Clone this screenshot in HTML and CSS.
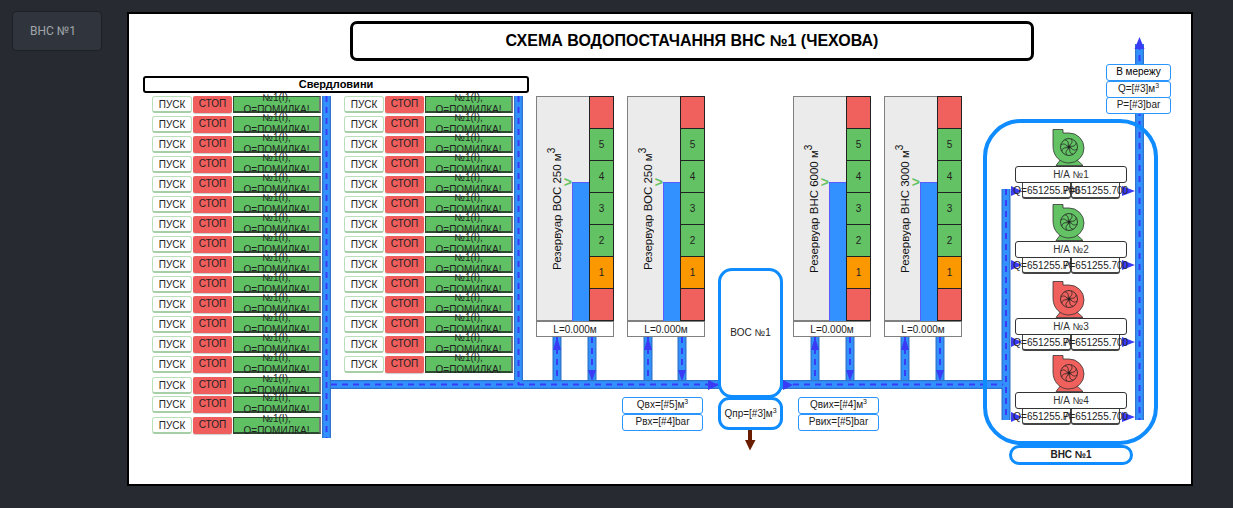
FILE: index.html
```html
<!DOCTYPE html>
<html lang="uk">
<head>
<meta charset="utf-8">
<title>ВНС №1</title>
<link rel="stylesheet" href="styles.css">
</head>
<body>
<aside class="sidebar"><div class="nav-btn">ВНС №1</div></aside>
<main class="canvas">
  <svg class="pipes" width="1062" height="470" viewBox="129 14 1062 470">
    <defs>
      <g id="blades" fill="none" stroke="#222" stroke-width=".8">
        <circle r="8.5"/>
        <circle r="1.2" fill="#222"/>
        <path d="M0 -1.5C3 -3 4 -6 2 -8"/>
        <path d="M0 -1.5C3 -3 4 -6 2 -8" transform="rotate(45)"/>
        <path d="M0 -1.5C3 -3 4 -6 2 -8" transform="rotate(90)"/>
        <path d="M0 -1.5C3 -3 4 -6 2 -8" transform="rotate(135)"/>
        <path d="M0 -1.5C3 -3 4 -6 2 -8" transform="rotate(180)"/>
        <path d="M0 -1.5C3 -3 4 -6 2 -8" transform="rotate(225)"/>
        <path d="M0 -1.5C3 -3 4 -6 2 -8" transform="rotate(270)"/>
        <path d="M0 -1.5C3 -3 4 -6 2 -8" transform="rotate(315)"/>
      </g>
      <g id="pump" stroke="#333" stroke-width=".8">
        <path d="M4 36.500L9 30H24L31 36.500Z"/>
        <path d="M1 .5H11V4H17A15 15 0 0 1 17 34C8 34 1 27 1 17Z"/>
        <use href="#blades" x="17" y="18"/>
      </g>
    </defs>
    <g class="pipe-edge">
      <path d="M326.500 96V438M518.500 96V385M331 384.500H1003"/>
      <path d="M557 337V380M592 337V380M648 337V380M682 337V380M815 337V380M850 337V380M905 337V380M940 337V380"/>
      <path d="M1006 189V420M1139.500 44V420"/>
    </g>
    <g class="pipe-core">
      <path d="M326.500 96V438M518.500 96V385M331 384.500H1003"/>
      <path d="M557 337V380M592 337V380M648 337V380M682 337V380M815 337V380M850 337V380M905 337V380M940 337V380"/>
      <path d="M1006 189V420M1139.500 44V420"/>
    </g>
    <g class="pipe-flow">
      <path d="M326.500 96V438M518.500 96V385M331 384.500H1003"/>
      <path d="M557 337V380M592 337V380M648 337V380M682 337V380M815 337V380M850 337V380M905 337V380M940 337V380"/>
      <path d="M1006 189V420M1139.500 44V420"/>
    </g>
    <g class="heads">
      <path d="M557 337L553 350H561ZM648 337L644 350H652ZM815 337L811 350H819ZM905 337L901 350H909Z"/>
      <path d="M592 381L588 370H596ZM682 381L678 370H686ZM850 381L846 370H854ZM940 381L936 370H944Z"/>
      <path d="M719 385L708 380V390ZM793 385L783 380V390Z"/>
      <path d="M1139.500 37L1134.500 49H1144.500Z"/>
      <path d="M1022 191L1011 186V196ZM1022 265L1011 260V270ZM1022 342L1011 337V347ZM1022 417L1011 412V422Z"/>
      <path d="M1135 191L1122 186V196ZM1135 265L1122 260V270ZM1135 342L1122 337V347ZM1135 417L1122 412V422Z"/>
    </g>
    <path class="drain" d="M750 430V442"/>
    <path class="drain-head" d="M750 450.500L745 440H755.500Z"/>
    <use href="#pump" class="pump-on" x="1052" y="129"/>
    <use href="#pump" class="pump-on" x="1052" y="204"/>
    <use href="#pump" class="pump-off" x="1052" y="281"/>
    <use href="#pump" class="pump-off" x="1052" y="355"/>
  </svg>

  <h1 class="title">СХЕМА ВОДОПОСТАЧАННЯ ВНС №1 (ЧЕХОВА)</h1>
  <div class="wells-title">Свердловини</div>

  <section class="wells wells-a">
    <div class="well"><span class="start">ПУСК</span><span class="stop">СТОП</span><div class="status">№1(І),<br>Q=ПОМИЛКА!</div></div>
    <div class="well"><span class="start">ПУСК</span><span class="stop">СТОП</span><div class="status">№1(І),<br>Q=ПОМИЛКА!</div></div>
    <div class="well"><span class="start">ПУСК</span><span class="stop">СТОП</span><div class="status">№1(І),<br>Q=ПОМИЛКА!</div></div>
    <div class="well"><span class="start">ПУСК</span><span class="stop">СТОП</span><div class="status">№1(І),<br>Q=ПОМИЛКА!</div></div>
    <div class="well"><span class="start">ПУСК</span><span class="stop">СТОП</span><div class="status">№1(І),<br>Q=ПОМИЛКА!</div></div>
    <div class="well"><span class="start">ПУСК</span><span class="stop">СТОП</span><div class="status">№1(І),<br>Q=ПОМИЛКА!</div></div>
    <div class="well"><span class="start">ПУСК</span><span class="stop">СТОП</span><div class="status">№1(І),<br>Q=ПОМИЛКА!</div></div>
    <div class="well"><span class="start">ПУСК</span><span class="stop">СТОП</span><div class="status">№1(І),<br>Q=ПОМИЛКА!</div></div>
    <div class="well"><span class="start">ПУСК</span><span class="stop">СТОП</span><div class="status">№1(І),<br>Q=ПОМИЛКА!</div></div>
    <div class="well"><span class="start">ПУСК</span><span class="stop">СТОП</span><div class="status">№1(І),<br>Q=ПОМИЛКА!</div></div>
    <div class="well"><span class="start">ПУСК</span><span class="stop">СТОП</span><div class="status">№1(І),<br>Q=ПОМИЛКА!</div></div>
    <div class="well"><span class="start">ПУСК</span><span class="stop">СТОП</span><div class="status">№1(І),<br>Q=ПОМИЛКА!</div></div>
    <div class="well"><span class="start">ПУСК</span><span class="stop">СТОП</span><div class="status">№1(І),<br>Q=ПОМИЛКА!</div></div>
    <div class="well"><span class="start">ПУСК</span><span class="stop">СТОП</span><div class="status">№1(І),<br>Q=ПОМИЛКА!</div></div>
    <div class="well well-down"><span class="start">ПУСК</span><span class="stop">СТОП</span><div class="status">№1(І),<br>Q=ПОМИЛКА!</div></div>
    <div class="well well-up"><span class="start">ПУСК</span><span class="stop">СТОП</span><div class="status">№1(І),<br>Q=ПОМИЛКА!</div></div>
    <div class="well well-down"><span class="start">ПУСК</span><span class="stop">СТОП</span><div class="status">№1(І),<br>Q=ПОМИЛКА!</div></div>
  </section>

  <section class="wells wells-b">
    <div class="well"><span class="start">ПУСК</span><span class="stop">СТОП</span><div class="status">№1(І),<br>Q=ПОМИЛКА!</div></div>
    <div class="well"><span class="start">ПУСК</span><span class="stop">СТОП</span><div class="status">№1(І),<br>Q=ПОМИЛКА!</div></div>
    <div class="well"><span class="start">ПУСК</span><span class="stop">СТОП</span><div class="status">№1(І),<br>Q=ПОМИЛКА!</div></div>
    <div class="well"><span class="start">ПУСК</span><span class="stop">СТОП</span><div class="status">№1(І),<br>Q=ПОМИЛКА!</div></div>
    <div class="well"><span class="start">ПУСК</span><span class="stop">СТОП</span><div class="status">№1(І),<br>Q=ПОМИЛКА!</div></div>
    <div class="well"><span class="start">ПУСК</span><span class="stop">СТОП</span><div class="status">№1(І),<br>Q=ПОМИЛКА!</div></div>
    <div class="well"><span class="start">ПУСК</span><span class="stop">СТОП</span><div class="status">№1(І),<br>Q=ПОМИЛКА!</div></div>
    <div class="well"><span class="start">ПУСК</span><span class="stop">СТОП</span><div class="status">№1(І),<br>Q=ПОМИЛКА!</div></div>
    <div class="well"><span class="start">ПУСК</span><span class="stop">СТОП</span><div class="status">№1(І),<br>Q=ПОМИЛКА!</div></div>
    <div class="well"><span class="start">ПУСК</span><span class="stop">СТОП</span><div class="status">№1(І),<br>Q=ПОМИЛКА!</div></div>
    <div class="well"><span class="start">ПУСК</span><span class="stop">СТОП</span><div class="status">№1(І),<br>Q=ПОМИЛКА!</div></div>
    <div class="well"><span class="start">ПУСК</span><span class="stop">СТОП</span><div class="status">№1(І),<br>Q=ПОМИЛКА!</div></div>
    <div class="well"><span class="start">ПУСК</span><span class="stop">СТОП</span><div class="status">№1(І),<br>Q=ПОМИЛКА!</div></div>
    <div class="well"><span class="start">ПУСК</span><span class="stop">СТОП</span><div class="status">№1(І),<br>Q=ПОМИЛКА!</div></div>
  </section>

  <section class="tank tank-1">
    <div class="tank-body">
      <div class="tank-left"><div class="tank-name">Резервуар ВОС 250 м<sup>3</sup></div><span class="level-mark">&gt;</span><div class="level"></div></div>
      <div class="scale"><div class="cell alarm"></div><div class="cell ok">5</div><div class="cell ok">4</div><div class="cell ok">3</div><div class="cell ok">2</div><div class="cell warn">1</div><div class="cell alarm"></div></div>
    </div>
    <div class="tank-level">L=0.000м</div>
  </section>
  <section class="tank tank-2">
    <div class="tank-body">
      <div class="tank-left"><div class="tank-name">Резервуар ВОС 250 м<sup>3</sup></div><span class="level-mark">&gt;</span><div class="level"></div></div>
      <div class="scale"><div class="cell alarm"></div><div class="cell ok">5</div><div class="cell ok">4</div><div class="cell ok">3</div><div class="cell ok">2</div><div class="cell warn">1</div><div class="cell alarm"></div></div>
    </div>
    <div class="tank-level">L=0.000м</div>
  </section>
  <section class="tank tank-3">
    <div class="tank-body">
      <div class="tank-left"><div class="tank-name">Резервуар ВНС 6000 м<sup>3</sup></div><span class="level-mark">&gt;</span><div class="level"></div></div>
      <div class="scale"><div class="cell alarm"></div><div class="cell ok">5</div><div class="cell ok">4</div><div class="cell ok">3</div><div class="cell ok">2</div><div class="cell warn">1</div><div class="cell alarm"></div></div>
    </div>
    <div class="tank-level">L=0.000м</div>
  </section>
  <section class="tank tank-4">
    <div class="tank-body">
      <div class="tank-left"><div class="tank-name">Резервуар ВНС 3000 м<sup>3</sup></div><span class="level-mark">&gt;</span><div class="level"></div></div>
      <div class="scale"><div class="cell alarm"></div><div class="cell ok">5</div><div class="cell ok">4</div><div class="cell ok">3</div><div class="cell ok">2</div><div class="cell warn">1</div><div class="cell alarm"></div></div>
    </div>
    <div class="tank-level">L=0.000м</div>
  </section>

  <section class="plant">
    <div class="plant-main">ВОС №1</div>
    <div class="plant-drain">Qпр=[#3]м<sup>3</sup></div>
  </section>
  <div class="readout readout-in"><div class="tag">Qвх=[#5]м<sup>3</sup></div><div class="tag">Рвх=[#4]bar</div></div>
  <div class="readout readout-out"><div class="tag">Qвих=[#4]м<sup>3</sup></div><div class="tag">Рвих=[#5]bar</div></div>
  <div class="readout readout-net"><div class="tag tag-strong">В мережу</div><div class="tag">Q=[#3]м<sup>3</sup></div><div class="tag">P=[#3]bar</div></div>

  <div class="station"></div>
  <div class="station-name">ВНС №1</div>

  <div class="unit unit-1"><div class="unit-name">Н/А №1</div><div class="unit-values unit-values-open"><div class="value">Q=651255.700</div><div class="value">P=651255.700</div></div></div>
  <div class="unit unit-2"><div class="unit-name">Н/А №2</div><div class="unit-values"><div class="value">Q=651255.700</div><div class="value">P=651255.700</div></div></div>
  <div class="unit unit-3"><div class="unit-name">Н/А №3</div><div class="unit-values"><div class="value">Q=651255.700</div><div class="value">P=651255.700</div></div></div>
  <div class="unit unit-4"><div class="unit-name">Н/А №4</div><div class="unit-values"><div class="value">Q=651255.700</div><div class="value">P=651255.700</div></div></div>
</main>
</body>
</html>
```
FILE: styles.css
```css
* { box-sizing: border-box; }
html, body { height: 100%; }
body {
  margin: 0;
  display: flex;
  align-items: flex-start;
  background: #272a30;
  overflow: hidden;
  font-family: "Liberation Sans", Arial, sans-serif;
}

.sidebar { width: 127px; flex: none; padding: 11px 0 0 12px; }
.nav-btn {
  width: 90px;
  height: 40px;
  padding-left: 17px;
  background: #30353d;
  border: 1px solid #1d2024;
  border-radius: 4px;
  color: #a0a5aa;
  font: 12px/38px Roboto, sans-serif;
}

.canvas {
  position: relative;
  flex: none;
  width: 1066px;
  height: 474px;
  margin-top: 12px;
  background: #fff;
  border: 2px solid #000;
  color: #222;
  font-size: 10px;
}

.pipes { position: absolute; left: 0; top: 0; }
.pipe-edge, .pipe-core, .pipe-flow { fill: none; }
.pipe-edge { stroke: #2f74c8; stroke-width: 9; }
.pipe-core { stroke: #3390ff; stroke-width: 6.5; }
.pipe-flow { stroke: #3a3cf5; stroke-width: 2; stroke-dasharray: 6 5; }
.heads { fill: #3a3cf5; }
.drain { fill: none; stroke: #6b1d00; stroke-width: 4; }
.drain-head { fill: #6b1d00; }
.pump-on { fill: #62c264; }
.pump-off { fill: #f0605c; }

.title {
  position: absolute;
  left: 221px;
  top: 7px;
  width: 684px;
  height: 40px;
  margin: 0;
  border: 3px solid #000;
  border-radius: 7px;
  background: #fff;
  color: #000;
  font-size: 16px;
  font-weight: 700;
  line-height: 34px;
  text-align: center;
}
.wells-title {
  position: absolute;
  left: 14px;
  top: 62px;
  width: 386px;
  height: 17px;
  border: 2px solid #000;
  border-radius: 3px;
  color: #000;
  font-size: 11px;
  font-weight: 700;
  line-height: 13px;
  text-align: center;
}

.wells { position: absolute; top: 82px; display: flex; flex-direction: column; gap: 3px; }
.wells-a { left: 23px; }
.wells-b { left: 215px; }
.well { position: relative; display: flex; height: 17px; gap: 1px; }
.well-down { margin-top: 1px; }
.well-up { margin-top: -1px; }
.start, .stop { height: 17px; line-height: 16px; text-align: center; }
.start {
  width: 40px;
  background: #fff;
  border: 1px solid #b9dfba;
  border-bottom: 2px solid #a6cfa8;
  border-radius: 3px;
}
.stop {
  width: 39px;
  background: #ef5e5c;
  border-radius: 2px;
  box-shadow: 0 1px 1px #ccc;
}
.status {
  display: flex;
  flex-direction: column;
  align-items: center;
  justify-content: center;
  width: 88px;
  height: 17px;
  background: #5fc064;
  border: 1px solid #2d4a30;
  border-bottom-width: 2px;
  border-right: 2px solid #777;
  clip-path: inset(-6px 0 0 0);
  line-height: 12.500px;
  text-align: center;
  white-space: nowrap;
}

.tank { position: absolute; top: 82px; width: 78px; }
.tank-1 { left: 407px; }
.tank-2 { left: 498px; }
.tank-3 { left: 664px; }
.tank-4 { left: 755px; }
.tank-body { display: flex; height: 225px; }
.tank-left {
  position: relative;
  flex: 1;
  background: #ebebeb;
  border: 1px solid #808080;
  border-right: 0;
}
.tank-name {
  position: absolute;
  left: 12px;
  top: 0;
  height: 100%;
  writing-mode: vertical-rl;
  transform: rotate(180deg);
  color: #111;
  font-size: 11.500px;
  line-height: 16px;
  text-align: center;
  white-space: nowrap;
}
.tank-name sup { font-size: 10px; line-height: 0; }
.level {
  position: absolute;
  right: 0;
  bottom: -1px;
  width: 17px;
  height: 139px;
  background: #3390ff;
  border-left: 1px solid #5a5cff;
  border-top: 1px solid #5a5cff;
}
.level-mark {
  position: absolute;
  right: 17px;
  top: 79px;
  color: #62c264;
  font-size: 14px;
  font-weight: 700;
  line-height: 13px;
}
.scale { display: flex; flex-direction: column; width: 25px; }
.cell {
  flex: 1;
  display: flex;
  align-items: center;
  justify-content: center;
  border: 1px solid #222;
  border-top-width: 0;
  color: #222;
  font-size: 10px;
}
.cell:first-child { border-top-width: 1px; }
.ok { background: #62c264; }
.warn { background: #fb9800; }
.alarm { background: #f0605c; }
.tank-level {
  height: 16px;
  background: #fff;
  border: 1px solid #808080;
  line-height: 15px;
  text-align: center;
}

.plant { position: absolute; left: 589px; top: 254px; width: 65px; }
.plant-main, .plant-drain {
  background: #fff;
  border: 3px solid #0f8cff;
  text-align: center;
}
.plant-main { height: 130px; border-radius: 14px; line-height: 124px; }
.plant-drain { height: 33px; margin-top: -1px; border-radius: 11px; line-height: 27px; white-space: nowrap; }
sup { font-size: 7px; line-height: 0; }

.readout { position: absolute; display: flex; flex-direction: column; }
.readout-in { left: 493px; top: 383px; width: 81px; }
.readout-out { left: 669px; top: 383px; width: 81px; }
.readout-net { left: 977px; top: 50px; width: 65px; }
.tag {
  height: 17px;
  margin-bottom: -.5px;
  background: #fff;
  border: 1.500px solid #2a95ff;
  border-radius: 3px;
  line-height: 14px;
  text-align: center;
  white-space: nowrap;
}
.tag-strong { color: #000; }

.station {
  position: absolute;
  left: 854px;
  top: 105px;
  width: 175px;
  height: 326px;
  border: 4px solid #0f8cff;
  border-radius: 38px;
  pointer-events: none;
}
.station-name {
  position: absolute;
  left: 880px;
  top: 431px;
  width: 124px;
  height: 20px;
  background: #fff;
  border: 3px solid #0f8cff;
  border-radius: 10px;
  font-weight: 700;
  line-height: 14px;
  text-align: center;
}

.unit { position: absolute; left: 886px; width: 112px; }
.unit-1 { top: 152px; }
.unit-2 { top: 227px; }
.unit-3 { top: 304px; }
.unit-4 { top: 378px; }
.unit-name {
  height: 17px;
  background: #fff;
  border: 1px solid #333;
  border-radius: 3px;
  color: #333;
  font-size: 10px;
  line-height: 16px;
  text-align: center;
}
.unit-values { display: flex; width: 97px; margin-left: 7px; }
.value {
  display: flex;
  justify-content: center;
  width: 49px;
  height: 16px;
  background: #fff;
  border: 1px solid #444;
  border-top: 0;
  border-bottom-width: 2px;
  border-radius: 0 0 3px 3px;
  font-size: 10px;
  line-height: 16px;
  white-space: nowrap;
}
.unit-values-open .value { background: transparent; }
```
